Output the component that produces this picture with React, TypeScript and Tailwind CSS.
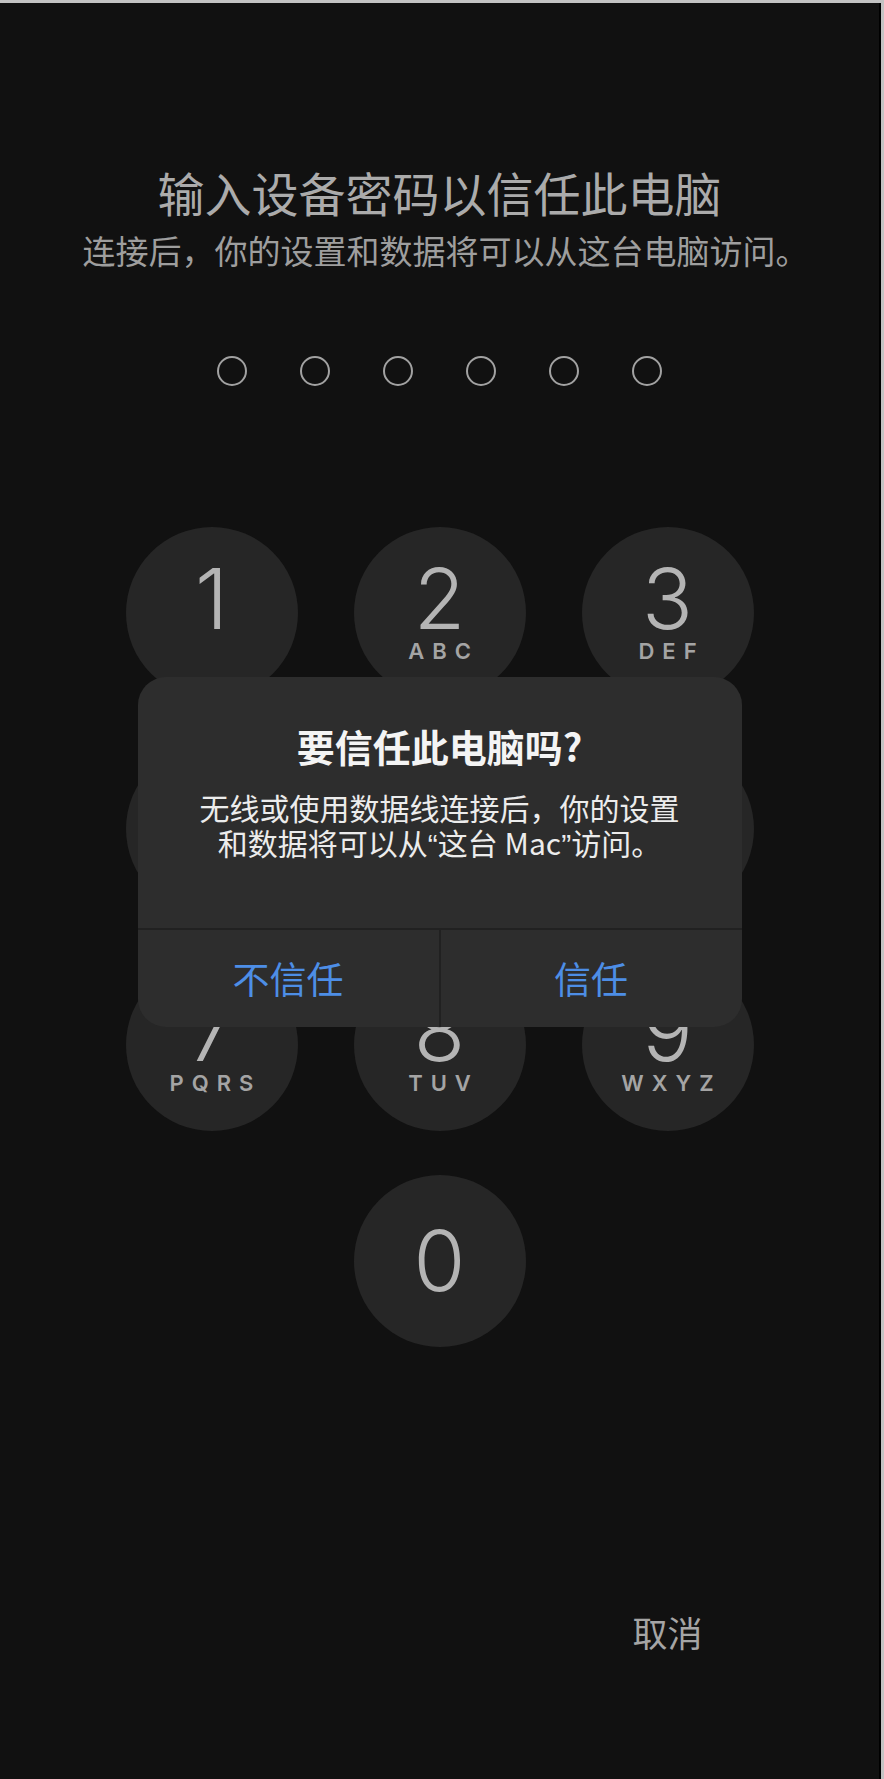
const keys = [
  { digit: '1', letters: '' },
  { digit: '2', letters: 'ABC' },
  { digit: '3', letters: 'DEF' },
  { digit: '4', letters: 'GHI' },
  { digit: '5', letters: 'JKL' },
  { digit: '6', letters: 'MNO' },
  { digit: '7', letters: 'PQRS' },
  { digit: '8', letters: 'TUV' },
  { digit: '9', letters: 'WXYZ' },
];

function Key({ digit, letters }: { digit: string; letters?: string }) {
  const hasRow = letters !== undefined;
  return (
    <div className="flex h-[172px] w-[172px] flex-col items-center justify-center rounded-full bg-[#262626] font-['Inter',sans-serif]">
      {hasRow ? (
        <div className="flex flex-col items-center pb-[8px]">
          <span className="text-[84px] font-light leading-[84px] text-[#b4b4b4]">{digit}</span>
          <span className="pl-[8px] text-[22px] font-semibold leading-[20px] tracking-[8px] text-[#a4a4a4]">
            {letters || '\u00a0'}
          </span>
        </div>
      ) : (
        <span className="text-[84px] font-light leading-[84px] text-[#b4b4b4]">{digit}</span>
      )}
    </div>
  );
}

export default function App() {
  return (
    <div className="min-h-screen bg-[#c3c3c3] pr-[3px] pt-[3px]">
      <div className="h-[1776px] bg-black pr-[2px]">
        <div className="flex h-full flex-col items-center bg-[#111111] pt-[161px] font-['Noto_Sans_CJK_SC',sans-serif]">
          <h1 className="text-[47px] font-normal leading-[56px] text-[#ababab]">输入设备密码以信任此电脑</h1>
          <p className="ml-[12px] mt-[10px] text-[33px] leading-[40px] text-[#9e9e9e]">
            连接后，你的设置和数据将可以从这台电脑访问。
          </p>

          <div className="mt-[86px] flex gap-[53px]">
            {[0, 1, 2, 3, 4, 5].map((i) => (
              <div key={i} className="h-[30px] w-[30px] rounded-full border-[2.5px] border-[#a2a2a2]" />
            ))}
          </div>

          <div className="relative mt-[141px] grid grid-cols-[repeat(3,172px)] gap-x-[56px] gap-y-[44px]">
            {keys.map((k) => (
              <Key key={k.digit} digit={k.digit} letters={k.letters} />
            ))}
            <div className="col-start-2">
              <Key digit="0" />
            </div>

            <div className="absolute left-1/2 top-[150px] w-[604px] -translate-x-1/2 overflow-hidden rounded-[28px] bg-[#2d2d2d]">
              <div className="flex h-[251px] flex-col items-center pt-[45px] text-center">
                <h2 className="text-[38px] font-semibold leading-[48px] text-[#f4f4f4]">要信任此电脑吗?</h2>
                <p className="mt-[20px] text-[30px] leading-[35px] text-[#ececec]">
                  无线或使用数据线连接后，你的设置
                  <br />
                  和数据将可以从<span className="font-['Liberation_Sans',sans-serif]">“</span>这台 Mac
                  <span className="font-['Liberation_Sans',sans-serif]">”</span>访问。
                </p>
              </div>
              <div className="flex h-[99px] border-t-2 border-[#212121]">
                <button className="flex-1 text-[37px] leading-none text-[#4d8ee6]">不信任</button>
                <div className="w-[2px] bg-[#212121]" />
                <button className="flex-1 text-[37px] leading-none text-[#4d8ee6]">信任</button>
              </div>
            </div>
          </div>

          <div className="mt-[263px] grid grid-cols-[repeat(3,172px)] gap-x-[56px]">
            <span className="col-start-3 text-center text-[35px] leading-[44px] text-[#a5a5a5]">取消</span>
          </div>
        </div>
      </div>
    </div>
  );
}
